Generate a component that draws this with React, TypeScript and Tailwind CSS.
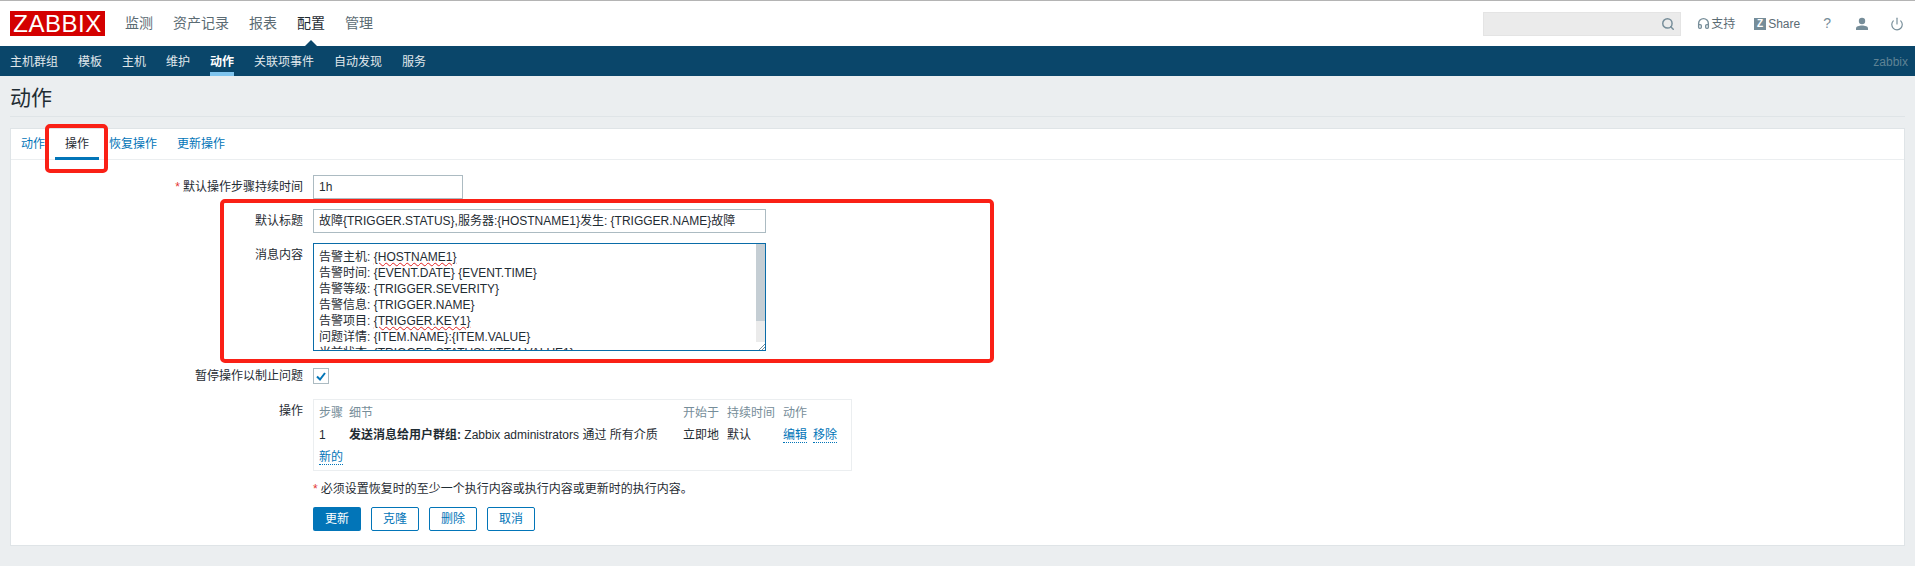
import { Headphones, Power, Search } from "lucide-react"

const font = "font-['Liberation_Sans','Noto_Sans_CJK_SC',sans-serif]"

const topMenu = ["监测", "资产记录", "报表", "配置", "管理"]
const subMenu = ["主机群组", "模板", "主机", "维护", "动作", "关联项事件", "自动发现", "服务"]
const tabs = ["动作", "操作", "恢复操作", "更新操作"]

const messageLines: { label: string; parts: { text: string; wavy?: boolean }[] }[] = [
  { label: "告警主机", parts: [{ text: "{HOSTNAME1}", wavy: true }] },
  { label: "告警时间", parts: [{ text: "{EVENT.DATE} {EVENT.TIME}" }] },
  { label: "告警等级", parts: [{ text: "{TRIGGER.SEVERITY}" }] },
  { label: "告警信息", parts: [{ text: "{TRIGGER.NAME}" }] },
  { label: "告警项目", parts: [{ text: "{TRIGGER.KEY1}", wavy: true }] },
  { label: "问题详情", parts: [{ text: "{ITEM.NAME}:{ITEM.VALUE}" }] },
  { label: "当前状态", parts: [{ text: "{TRIGGER.STATUS}:{ITEM.VALUE1}" }] },
]

function Header() {
  return (
    <div className="flex h-[46px] items-center border-t border-[#b4b4b4] bg-white pl-[10px] pr-[11px]">
      <div className="flex h-[25px] w-[95px] items-center justify-center bg-[#d40000] text-[24px] leading-none tracking-[0.5px] text-white">
        ZABBIX
      </div>
      <div className="ml-[20px] flex gap-[20px] text-[14px] text-[#5b6b73]">
        {topMenu.map((item) => (
          <span key={item} className={item === "配置" ? "relative text-[#1f2c33]" : ""}>
            {item}
            {item === "配置" && (
              <span className="absolute left-[6px] top-[27px] h-0 w-0 border-x-8 border-b-8 border-x-transparent border-b-[#0a466a]" />
            )}
          </span>
        ))}
      </div>
      <div className="ml-auto flex items-center text-[#768d99]">
        <div className="flex h-[24px] w-[198px] items-center justify-end border border-[#e4e4e4] bg-[#ebebeb] pr-[5px]">
          <Search size={14} strokeWidth={2.5} />
        </div>
        <Headphones size={13} strokeWidth={2.5} className="ml-[16px]" />
        <span className="ml-[1px] w-[26px] text-[12px] text-[#5b6b73]">支持</span>
        <span className="ml-[17px] flex h-[12px] w-[12px] items-center justify-center bg-[#768d99] text-[10px] font-bold leading-none text-white">
          Z
        </span>
        <span className="ml-[2px] text-[12px] text-[#5b6b73]">Share</span>
        <span className="ml-[23px] text-[14px]">?</span>
        <svg width="14" height="14" viewBox="0 0 14 14" className="ml-[24px] fill-[#768d99]">
          <circle cx="7" cy="4" r="3.2" />
          <path d="M1 13v-1.6C1 9.6 4 8.6 7 8.6s6 1 6 2.8V13z" />
        </svg>
        <Power size={14} strokeWidth={2} className="ml-[21px]" />
      </div>
    </div>
  )
}

function SubNav() {
  return (
    <div className="flex h-[30px] items-stretch justify-between bg-[#0a466a] pl-[10px] pr-[7px] text-[12px]">
      <div className="flex gap-[20px]">
        {subMenu.map((item) => (
          <span
            key={item}
            className={
              item === "动作"
                ? "h-[30px] border-b-4 border-[#7fc4ee] pt-[7px] font-bold text-white"
                : "pt-[7px] text-[#e0e8ec]"
            }
          >
            {item}
          </span>
        ))}
      </div>
      <span className="pt-[7px] text-[#5f8395]">zabbix</span>
    </div>
  )
}

function FormRow({
  label,
  required,
  className,
  labelClass,
  children,
}: {
  label: string
  required?: boolean
  className?: string
  labelClass?: string
  children: React.ReactNode
}) {
  return (
    <div className={"flex items-start " + (className ?? "")}>
      <div className={"w-[302px] pr-[10px] text-right leading-[16px] text-[#1f2c33] " + (labelClass ?? "pt-[4px]")}>
        {required && <span className="mr-[3px] text-[#e33734]">*</span>}
        {label}
      </div>
      {children}
    </div>
  )
}

function TextInput({ value, width }: { value: string; width: string }) {
  return (
    <div className={"h-[24px] border border-[#acbbc2] px-[5px] leading-[22px] text-[#1f2c33] " + width}>{value}</div>
  )
}

function MessageBox() {
  return (
    <div className="flex h-[108px] w-[453px] overflow-hidden border border-[#0a6ca8]">
      <div className="flex-1 overflow-hidden pl-[5px] pt-[5px] leading-[16px] text-[#1f2c33]">
        {messageLines.map((line) => (
          <div key={line.label} className="whitespace-nowrap">
            {line.label}:{" "}
            {line.parts.map((p) => (
              <span key={p.text} className={p.wavy ? "underline decoration-[#e02020] decoration-wavy decoration-1" : ""}>
                {p.text}
              </span>
            ))}
          </div>
        ))}
      </div>
      <div className="flex w-[9px] flex-col bg-[#ebebeb]">
        <div className="h-[77px] bg-[#c5ced4]" />
        <div className="flex-1" />
        <div className="flex h-[8px] items-end justify-end bg-white">
          <svg width="7" height="7" viewBox="0 0 7 7" className="stroke-[#768d99]">
            <path d="M1 7L7 1M4 7l3-3" />
          </svg>
        </div>
      </div>
    </div>
  )
}

function OperationsTable() {
  return (
    <div className="grid h-[72px] w-[539px] grid-cols-[30px_334px_44px_56px_30px_auto] grid-rows-[22px_22px_22px] items-center border border-[#ebeef0] px-[5px] pt-[2px] text-[#1f2c33]">
      <span className="text-[#768d99]">步骤</span>
      <span className="text-[#768d99]">细节</span>
      <span className="text-[#768d99]">开始于</span>
      <span className="text-[#768d99]">持续时间</span>
      <span className="col-span-2 text-[#768d99]">动作</span>
      <span>1</span>
      <span className="whitespace-nowrap">
        <b>发送消息给用户群组:</b> Zabbix administrators 通过 所有介质
      </span>
      <span>立即地</span>
      <span>默认</span>
      <span className="w-fit border-b border-dotted border-[#0275b8] leading-[14px] text-[#0275b8]">编辑</span>
      <span className="w-fit border-b border-dotted border-[#0275b8] leading-[14px] text-[#0275b8]">移除</span>
      <span className="w-fit whitespace-nowrap border-b border-dotted border-[#0275b8] leading-[14px] text-[#0275b8]">新的</span>
    </div>
  )
}

export default function App() {
  return (
    <div className={"relative min-h-screen overflow-hidden bg-[#ebeef0] text-[12px] " + font}>
      <Header />
      <SubNav />

      <div className="px-[10px]">
        <div className="flex h-[41px] items-center border-b border-[#dfe4e7] pt-[4px] text-[21px] text-[#1f2c33]">动作</div>

        <div className="mt-[11px] h-[418px] border border-[#dfe4e7] bg-white">
          <div className="flex h-[31px] border-b border-[#ebeef0]">
            {tabs.map((tab) => (
              <span
                key={tab}
                className={
                  tab === "操作"
                    ? "h-[31px] border-b-[3px] border-[#0275b8] px-[10px] pt-[6px] text-[#1f2c33]"
                    : "px-[10px] pt-[6px] text-[#0275b8]"
                }
              >
                {tab}
              </span>
            ))}
          </div>

          <FormRow label="默认操作步骤持续时间" required className="mt-[15px]">
            <TextInput value="1h" width="w-[150px]" />
          </FormRow>
          <FormRow label="默认标题" className="mt-[10px]">
            <TextInput value="故障{TRIGGER.STATUS},服务器:{HOSTNAME1}发生: {TRIGGER.NAME}故障" width="w-[453px]" />
          </FormRow>
          <FormRow label="消息内容" className="mt-[10px]">
            <MessageBox />
          </FormRow>
          <FormRow label="暂停操作以制止问题" labelClass="pt-0" className="mt-[17px]">
            <div className="flex h-[16px] w-[16px] items-center justify-center border border-[#acbbc2]">
              <svg width="12" height="12" viewBox="0 0 12 12" className="fill-none stroke-[#0275b8] stroke-2">
                <path d="M2 6.5l3 3 5-6.5" />
              </svg>
            </div>
          </FormRow>
          <FormRow label="操作" className="mt-[15px]">
            <OperationsTable />
          </FormRow>

          <div className="ml-[302px] mt-[10px] leading-[16px] text-[#1f2c33]">
            <span className="mr-[3px] text-[#e33734]">*</span>
            必须设置恢复时的至少一个执行内容或执行内容或更新时的执行内容。
          </div>

          <div className="ml-[302px] mt-[10px] flex gap-[10px]">
            <button className="h-[24px] w-[48px] rounded-[2px] bg-[#0275b8] text-white">更新</button>
            {["克隆", "删除", "取消"].map((label) => (
              <button key={label} className="h-[24px] w-[48px] rounded-[2px] border border-[#0275b8] text-[#0275b8]">
                {label}
              </button>
            ))}
          </div>
        </div>
      </div>

      {/* red markup boxes drawn on top of the screenshot */}
      <div className="absolute left-[45px] top-[124px] h-[49px] w-[63px] rounded-[5px] border-[4px] border-[#fa2016]" />
      <div className="absolute left-[220px] top-[199px] h-[164px] w-[774px] rounded-[5px] border-[4px] border-[#fa2016]" />
    </div>
  )
}
